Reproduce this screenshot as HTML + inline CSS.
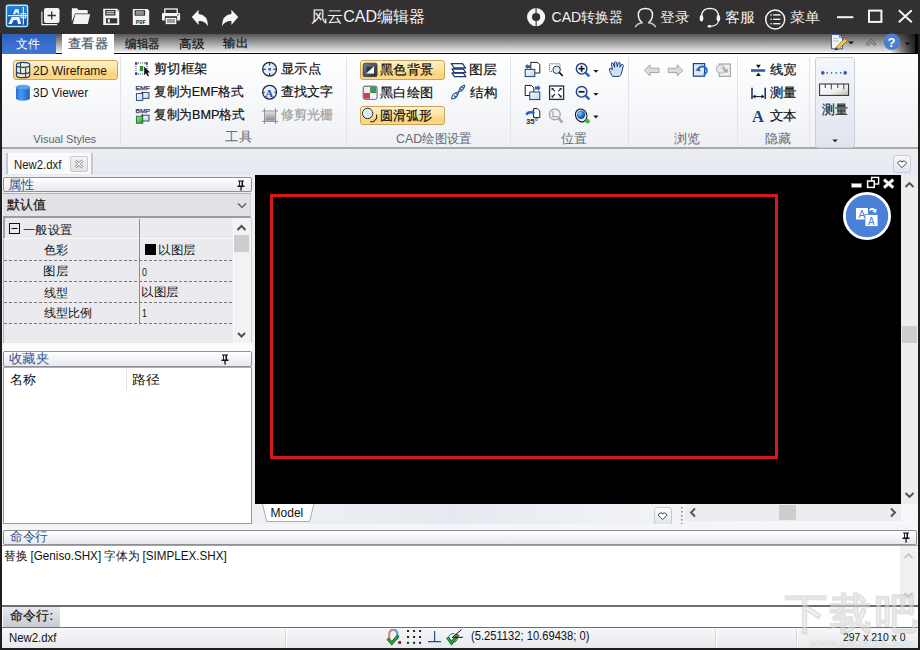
<!DOCTYPE html>
<html><head><meta charset="utf-8">
<style>
*{box-sizing:border-box;margin:0;padding:0}
html,body{width:920px;height:650px;overflow:hidden;background:#f0f0f0;font-family:"Liberation Sans",sans-serif;font-size:12px;color:#000}
.a{position:absolute;white-space:nowrap}
[id^=t_]{-webkit-text-stroke:0.2px currentColor}
#t_title,#t_conv,#t_login,#t_serv,#t_menu,#t_file,#t_fav,#t_prop,#t_cmdh,#t_name,#t_path,#t_2dw,#t_3dv,#t_vs,#t_tools,#t_cad,#t_pos,#t_brw,#t_hid,#t_tab,#t_model,#t_cmdl,#t_sfile,#t_coord,#t_size,#t_gen,#t_col,#t_glay,#t_ltype,#t_lscale,#t_v1,#t_v2,#t_v3,#t_v4{-webkit-text-stroke:0}
#title{left:0;top:0;width:920px;height:34px;background:#323031}
#menubar{left:0;top:34px;width:920px;height:19px;background:linear-gradient(#565656,#f2f2f2)}
#menuline{left:0;top:52px;width:920px;height:1px;background:#fff}
#menublack{left:0;top:53px;width:920px;height:1px;background:#000}
#ribbon{left:0;top:54px;width:920px;height:94px;background:linear-gradient(#ffffff 0%,#f7f8fa 50%,#eef0f4 100%)}
#ribbonline{left:0;top:147px;width:920px;height:2px;background:#a9a9a9}
#doctabs{left:0;top:149px;width:920px;height:26px;background:linear-gradient(#eceef4,#e6e9f1)}
.sep{position:absolute;top:57px;width:1px;height:89px;background:#e2e4e9}
.glabel{position:absolute;top:130px;color:#6d6d6d;font-size:13px}
.rt{position:absolute;font-size:13px;color:#1a1a1a}
.obtn{position:absolute;border:1px solid #c9a458;border-radius:3px;background:linear-gradient(#fdf1cc,#fde3a0 45%,#fbd277 75%,#fcd98a)}
</style></head><body>
<div class="a" id="title"></div>
<div class="a" id="menubar"></div>
<div class="a" id="menuline"></div>
<div class="a" id="menublack"></div>
<div class="a" style="left:890px;top:34px;width:28px;height:19px;background:linear-gradient(90deg,rgba(40,40,40,0),rgba(40,40,40,0.55) 45%,rgba(25,25,25,0.95) 88%,#000 92%)"></div>
<div class="a" id="ribbon"></div>
<div class="a" id="ribbonline"></div>
<div class="a" id="doctabs"></div>


<svg class="a" style="left:0;top:0" width="920" height="34" viewBox="0 0 920 34">
 <defs><linearGradient id="lg1" x1="0" y1="0" x2="0" y2="1"><stop offset="0" stop-color="#2484dc"/><stop offset="1" stop-color="#1a4aa8"/></linearGradient></defs>
 <!-- logo -->
 <rect x="6.4" y="5.2" width="21.2" height="21.2" rx="1.6" fill="url(#lg1)" stroke="#a8e8ff" stroke-width="1.5"/>
 <path d="M15 9.2 H18.6 L19.3 14.2 H12.8 Z" fill="#eef8ff"/>
 <path d="M15.6 12.6 H17.6 L17.9 14.2 H15.3 Z" fill="#2a70c8"/>
 <path d="M8.2 23.9 L11.8 16.9 H19.3 L21.2 23.9 H18.1 L17 19.9 H13.7 L11.6 23.9 Z" fill="#eef8ff"/>
 <rect x="7.8" y="15.1" width="19.4" height="1.1" fill="#eef8ff"/>
 <rect x="22.8" y="7" width="1.1" height="17.6" fill="#eef8ff"/>
 <rect x="21.1" y="13.6" width="4.6" height="4.2" fill="none" stroke="#eef8ff" stroke-width="0.9"/>
 <!-- new -->
 <path d="M41.9 11.4 V24.6 H57.2" fill="none" stroke="#f4f4f4" stroke-width="1.1"/>
 <rect x="44" y="8" width="15.5" height="15" rx="2" fill="#f4f4f4"/>
 <path d="M47.6 15.5 H55.8 M51.7 11.4 V19.6" stroke="#323031" stroke-width="1.3"/>
 <!-- open folder -->
 <path d="M71.8 22 V9.2 Q71.8 8.2 72.8 8.2 H77 L78.5 10 H86.5 Q87.8 10 87.8 11.2 V13.5 H75 L71.8 22 Z" fill="#f4f4f4"/>
 <path d="M72.8 24 L75.3 14.2 H90.2 L87.8 24 Z" fill="#f4f4f4"/>
 <!-- save -->
 <path d="M103.2 8.7 H117.5 L119.2 10.4 V25 H103.2 Z" fill="#f4f4f4"/>
 <rect x="105.2" y="10" width="10.3" height="5.5" fill="#323031"/>
 <rect x="106.3" y="11.3" width="8" height="1" fill="#f4f4f4"/><rect x="106.3" y="13.3" width="8" height="0.9" fill="#f4f4f4"/>
 <rect x="106" y="18.2" width="11.2" height="5.2" fill="#323031"/>
 <rect x="107.8" y="19.2" width="2" height="3.4" fill="#f4f4f4"/>
 <rect x="117.6" y="9.6" width="0.8" height="1.6" fill="#323031"/>
 <!-- save pdf -->
 <path d="M132.8 9 H147.5 L149.2 10.7 V25 H132.8 Z" fill="#f4f4f4"/>
 <rect x="134.6" y="10.2" width="10.5" height="5.5" fill="#323031"/>
 <rect x="135.8" y="11.5" width="8" height="1" fill="#f4f4f4"/><rect x="135.8" y="13.5" width="8" height="0.9" fill="#f4f4f4"/>
 <text x="135.8" y="24" font-family="Liberation Mono" font-size="5.6" font-weight="bold" fill="#323031">PDF</text>
 <!-- printer -->
 <rect x="164.8" y="9" width="12.4" height="5" fill="none" stroke="#f4f4f4" stroke-width="1.3"/>
 <rect x="162" y="13" width="18.1" height="7.6" rx="1" fill="#f4f4f4"/>
 <rect x="165" y="16.2" width="12" height="1.6" fill="#323031"/>
 <rect x="165.2" y="17.5" width="11.6" height="7.1" fill="#f4f4f4" stroke="#323031" stroke-width="0.8"/>
 <rect x="167" y="19.5" width="8" height="0.9" fill="#323031"/><rect x="167" y="21.5" width="8" height="0.9" fill="#323031"/>
 <rect x="177.3" y="14.3" width="1.4" height="1.2" fill="#323031"/>
 <!-- undo -->
 <path d="M191.8 16.9 L198.6 9.8 V13.9 Q207.8 14.6 208.2 26.5 Q205.2 20.6 198.6 21 V25.1 Z" fill="#f6f6f6"/>
 <!-- redo -->
 <path d="M238.2 16.9 L231.4 9.8 V13.9 Q222.2 14.6 221.8 26.5 Q224.8 20.6 231.4 21 V25.1 Z" fill="#f6f6f6"/>
 <!-- CAD converter ring -->
 <circle cx="536.1" cy="17.1" r="6.6" fill="none" stroke="#f4f4f4" stroke-width="5"/>
 <rect x="535.5" y="7" width="1.1" height="6" fill="#323031"/>
 <rect x="535.6" y="21.2" width="1.1" height="6" fill="#323031"/>
 <!-- user -->
 <path d="M642.5 22.8 Q638.3 20 638.3 14.5 Q638.5 8.4 645.4 8.4 Q652.3 8.4 652.5 14.5 Q652.5 20 648.3 22.8" fill="none" stroke="#f0f0f0" stroke-width="1.5"/>
 <path d="M635.3 27.3 Q637 23.3 642.5 22.8 M648.3 22.8 Q654 23.3 655.7 27.3" fill="none" stroke="#c8c8c8" stroke-width="1.5"/>
 <!-- headset -->
 <path d="M701.5 18 Q701 8.5 710 8.4 Q719 8.5 718.5 18" fill="none" stroke="#f4f4f4" stroke-width="1.4"/>
 <ellipse cx="701.5" cy="18.2" rx="1.8" ry="3.3" fill="#f4f4f4"/>
 <ellipse cx="718.4" cy="18.2" rx="1.8" ry="3.3" fill="#f4f4f4"/>
 <path d="M718.4 21 Q718 25.8 710.5 26.3" fill="none" stroke="#f4f4f4" stroke-width="1.2"/>
 <ellipse cx="709.5" cy="26.3" rx="1.9" ry="1.4" fill="#f4f4f4"/>
 <!-- menu circle -->
 <circle cx="775.2" cy="19.5" r="9.5" fill="none" stroke="#f4f4f4" stroke-width="1.5"/>
 <rect x="770.4" y="14.2" width="1.4" height="1.4" fill="#f4f4f4"/><rect x="773.2" y="14.2" width="7.2" height="1.4" fill="#f4f4f4"/>
 <rect x="770.4" y="18.6" width="1.4" height="1.4" fill="#f4f4f4"/><rect x="773.2" y="18.6" width="7.2" height="1.4" fill="#f4f4f4"/>
 <rect x="770.4" y="23" width="1.4" height="1.4" fill="#f4f4f4"/><rect x="773.2" y="23" width="7.2" height="1.4" fill="#f4f4f4"/>
 <!-- window controls -->
 <rect x="837" y="16.2" width="16.3" height="2" fill="#f4f4f4"/>
 <rect x="869" y="10.6" width="12.4" height="11.3" fill="none" stroke="#f4f4f4" stroke-width="2"/>
 <path d="M898.8 10.2 L911.8 22.2 M911.8 10.2 L898.8 22.2" stroke="#f4f4f4" stroke-width="1.9"/>
</svg>

<!-- title text -->

<!-- menu tabs -->
<div class="a" style="left:2px;top:34px;width:54px;height:20px;background:linear-gradient(#2d5fbd,#3a70cf 60%,#3c76d6)"></div>
<div class="a" style="left:62px;top:34px;width:52px;height:20px;background:#fff"></div>


<!-- doc tab -->
<div class="a" style="left:6px;top:153px;width:2px;height:21px;background:#c8c8cc"></div>
<div class="a" style="left:8px;top:153px;width:83px;height:21px;background:#fafafa"></div>
<div class="a" style="left:91px;top:153px;width:2px;height:21px;background:#c8c8cc"></div>
<div class="a" style="left:70px;top:156px;width:18px;height:16px;border:1px solid #c9c9cc;border-radius:2px;background:linear-gradient(#f4f4f4,#e2e2e4)"></div>
<svg class="a" style="left:70px;top:156px" width="18" height="16" viewBox="0 0 18 16"><path d="M5.5 4.5 L12.5 11.5 M12.5 4.5 L5.5 11.5" stroke="#777" stroke-width="2.6"/><path d="M5.5 4.5 L12.5 11.5 M12.5 4.5 L5.5 11.5" stroke="#fff" stroke-width="1.2"/></svg>
<div class="a" style="left:893px;top:155px;width:18px;height:18px;border:1px solid #c9cdd5;border-radius:3px;background:linear-gradient(#f6f7f9,#dfe4ec)"></div>
<svg class="a" style="left:893px;top:155px" width="18" height="18" viewBox="0 0 18 18"><path d="M4.4 8 L6.4 6 H8.2 L9 7.2 L9.8 6 H11.6 L13.6 8 L9 12.6 Z" fill="#fff" stroke="#333" stroke-width="0.9"/></svg>

<!-- left window border -->
<div class="a" style="left:0;top:34px;width:2px;height:616px;background:#1e1e1e"></div>
<div class="a" style="left:918px;top:34px;width:2px;height:616px;background:#1e1e1e"></div>
<div class="a" style="left:0;top:647px;width:920px;height:3px;background:#1e1e1e"></div>

<!-- properties panel -->
<div class="a" style="left:2px;top:175px;width:253px;height:355px;background:#f0f0f2"></div>
<div class="a" style="left:3px;top:177px;width:249px;height:15px;border:1px solid #8e9094;border-radius:2px;background:linear-gradient(#ffffff,#e6e8ee)"></div>
<svg class="a" style="left:236px;top:180px" width="10" height="11" viewBox="0 0 10 11"><path d="M2 0.5 H8 V1.5 H7 V5.5 H8.5 V7 H1.5 V5.5 H3 V1.5 H2 Z" fill="#111"/><rect x="3.9" y="1.6" width="1.6" height="3.9" fill="#f0f0f0"/><rect x="4.4" y="7" width="1.3" height="3.6" fill="#111"/></svg>
<div class="a" style="left:3px;top:193px;width:248px;height:25px;background:#e2e1e5;border-top:1px solid #b0b0b4;border-bottom:2px solid #9c9c9f;border-right:1px solid #d0d0d4"></div>
<svg class="a" style="left:237px;top:201px" width="10" height="9" viewBox="0 0 10 9"><path d="M1 2.5 L5 6.5 L9 2.5" fill="none" stroke="#555" stroke-width="1.2"/></svg>

<!-- grid -->
<div class="a" style="left:3px;top:218px;width:230px;height:125px;background:#ebebef;border-left:1px solid #b4b4b8"></div><div class="a" style="left:3px;top:218px;width:2px;height:20px;background:#a0a0a4"></div>
<div class="a" style="left:4px;top:238px;width:229px;height:1px;background:#fafafa"></div>
<div class="a" style="left:139px;top:219px;width:1px;height:104px;background:#8c8c8c"></div>
<svg class="a" style="left:4px;top:259px" width="229" height="66" viewBox="0 0 229 66"><path d="M0 1.5 H229 M0 22.5 H229 M0 43.5 H229 M0 64.5 H229" stroke="#7a7a7a" stroke-width="1" stroke-dasharray="3 2"/></svg>
<svg class="a" style="left:9px;top:223px" width="12" height="11" viewBox="0 0 12 11"><rect x="0.5" y="0.5" width="10" height="10" fill="none" stroke="#111"/><path d="M2.5 5.5 H8.5" stroke="#111"/></svg>
<div class="a" style="left:145px;top:244px;width:11px;height:11px;background:#000"></div>
<!-- grid scrollbar -->
<div class="a" style="left:233px;top:218px;width:18px;height:125px;background:#f2f2f4;border-left:1px solid #fafafa"></div>
<svg class="a" style="left:233px;top:219px" width="17" height="124" viewBox="0 0 17 124"><path d="M4.5 11 L8.5 7 L12.5 11" fill="none" stroke="#505050" stroke-width="2"/><rect x="1" y="16" width="15" height="17" fill="#cdcdcd"/><path d="M5 114 L8.5 117.5 L12 114" fill="none" stroke="#505050" stroke-width="2"/></svg>
<div class="a" style="left:251px;top:218px;width:1px;height:124px;background:#d0d0d4"></div>
<div class="a" style="left:3px;top:343px;width:249px;height:8px;background:#fbfbfc"></div>

<!-- favorites -->
<div class="a" style="left:3px;top:351px;width:249px;height:16px;border:1px solid #8e9094;border-radius:2px;background:linear-gradient(#ffffff,#e6e8ee)"></div>
<svg class="a" style="left:220px;top:354px" width="10" height="11" viewBox="0 0 10 11"><path d="M2 0.5 H8 V1.5 H7 V5.5 H8.5 V7 H1.5 V5.5 H3 V1.5 H2 Z" fill="#111"/><rect x="3.9" y="1.6" width="1.6" height="3.9" fill="#f0f0f0"/><rect x="4.4" y="7" width="1.3" height="3.6" fill="#111"/></svg>
<div class="a" style="left:3px;top:367px;width:249px;height:157px;background:#fff;border:1px solid #9a9a9a;border-top:1px solid #b0b0b0"></div>
<div class="a" style="left:126px;top:369px;width:1px;height:21px;background:#e2e2e2"></div>

<!-- viewport -->
<div class="a" style="left:255px;top:175px;width:646px;height:329px;background:#000"></div>
<div class="a" style="left:270px;top:194px;width:508px;height:265px;border:3px solid #d41a1a"></div>
<svg class="a" style="left:840px;top:174px" width="62" height="70" viewBox="840 174 62 70">
 <rect x="851.5" y="183.5" width="10" height="3.8" fill="#fff" stroke="#888" stroke-width="0.6"/>
 <rect x="871.6" y="177.4" width="7" height="6.6" fill="#000" stroke="#fff" stroke-width="1.4"/>
 <rect x="867.6" y="181" width="6.6" height="6.4" fill="#000" stroke="#fff" stroke-width="1.5"/>
 <path d="M884 179.6 L893.2 187.6 M893.2 179.6 L884 187.6" stroke="#999" stroke-width="3.4"/>
 <path d="M884 179.6 L893.2 187.6 M893.2 179.6 L884 187.6" stroke="#f4f8ff" stroke-width="2.2"/>
 <circle cx="867" cy="216" r="22.6" fill="#4a80d6" stroke="#fff" stroke-width="2.8"/>
 <rect x="856" y="208" width="12" height="11.5" fill="#fff"/>
 <text x="858.5" y="218" font-family="Liberation Sans" font-size="10" fill="#4a80d6">A</text>
 <rect x="865" y="214.5" width="13" height="12" fill="#fff" stroke="#4a80d6" stroke-width="0.8"/>
 <text x="868" y="224.5" font-family="Liberation Sans" font-size="10" fill="#4a80d6">A</text>
 <path d="M869 210 Q872 206 875 209.5 L876.6 208.4 L876 213 L872.2 211.6 L873.8 210.6 Q872 208.6 870.2 211 Z" fill="#fff"/>
</svg>
<!-- vscroll -->
<div class="a" style="left:901px;top:175px;width:17px;height:329px;background:#ededef"></div>
<svg class="a" style="left:901px;top:175px" width="17" height="329" viewBox="0 0 17 329"><path d="M4.5 12 L8.5 8 L12.5 12" fill="none" stroke="#505050" stroke-width="1.9"/><rect x="1" y="151" width="15" height="17" fill="#cdcdcd"/><path d="M4.5 318 L8.5 322 L12.5 318" fill="none" stroke="#505050" stroke-width="1.9"/></svg>
<!-- layout tabs strip -->
<div class="a" style="left:255px;top:504px;width:663px;height:20px;background:linear-gradient(90deg,#eef0f4,#e6eaf0 30%,#f4f5f8 70%,#f6f7f9)"></div>
<svg class="a" style="left:262px;top:503px" width="54" height="20" viewBox="0 0 54 20"><path d="M0.5 1 L4.8 18.5 H47.5 L52 1" fill="#fff" stroke="#a8acb4" stroke-width="1"/></svg>
<div class="a" style="left:654px;top:507px;width:18px;height:18px;border:1px solid #c5cad3;border-radius:3px;background:linear-gradient(#fbfbfc,#dfe5ee)"></div>
<svg class="a" style="left:648px;top:500px" width="42" height="28" viewBox="648 500 42 28"><path d="M658 515 L660 513 H661.8 L662.6 514.2 L663.4 513 H665.2 L667.2 515 L662.6 519.6 Z" fill="#fff" stroke="#333" stroke-width="0.9" stroke-linejoin="miter"/>
<path d="M681.8 507 V525" stroke="#777" stroke-width="1.4" stroke-dasharray="1.6 2.4"/></svg>
<div class="a" style="left:685px;top:504px;width:216px;height:17px;background:#ececee"></div>
<svg class="a" style="left:685px;top:504px" width="216" height="17" viewBox="0 0 216 17"><path d="M10 4.5 L6 8.5 L10 12.5" fill="none" stroke="#505050" stroke-width="1.9"/><rect x="94" y="1" width="17" height="15" fill="#cdcdcd"/><path d="M206 4.5 L210 8.5 L206 12.5" fill="none" stroke="#505050" stroke-width="1.9"/></svg>

<!-- command line panel -->
<div class="a" style="left:2px;top:524px;width:916px;height:6px;background:#f4f5f8"></div>
<div class="a" style="left:3px;top:530px;width:914px;height:15px;border:1px solid #8e9094;border-radius:2px;background:linear-gradient(#ffffff,#e6e8ee)"></div><div class="a" style="left:2px;top:545px;width:916px;height:1px;background:#a4a4a8"></div>
<svg class="a" style="left:901px;top:532px" width="10" height="11" viewBox="0 0 10 11"><path d="M2 0.5 H8 V1.5 H7 V5.5 H8.5 V7 H1.5 V5.5 H3 V1.5 H2 Z" fill="#111"/><rect x="3.9" y="1.6" width="1.6" height="3.9" fill="#f0f0f0"/><rect x="4.4" y="7" width="1.3" height="3.6" fill="#111"/></svg>
<div class="a" style="left:2px;top:546px;width:916px;height:59px;background:#fff"></div>
<div class="a" style="left:900px;top:546px;width:17px;height:59px;background:#f0f0f0"></div>
<svg class="a" style="left:900px;top:546px" width="17" height="59" viewBox="0 0 17 59"><path d="M4.5 12 L8.5 8 L12.5 12" fill="none" stroke="#bbb" stroke-width="1.5"/><path d="M4.5 47 L8.5 51 L12.5 47" fill="none" stroke="#bbb" stroke-width="1.5"/></svg>
<div class="a" style="left:2px;top:605px;width:916px;height:23px;border-top:2px solid #6e6e72;border-bottom:1px solid #6e6e72;background:#fff"></div>
<div class="a" style="left:3px;top:607px;width:57px;height:20px;background:linear-gradient(#e8e9ee,#c8cad2)"></div>
<!-- status bar -->
<div class="a" style="left:2px;top:628px;width:916px;height:20px;background:linear-gradient(#f6f7f9,#e7e9ee)"></div>
<svg class="a" style="left:380px;top:628px" width="90" height="20" viewBox="380 628 90 20">
 <path d="M389.2 639.5 V634.5 Q389.2 629.8 393.3 629.8" fill="none" stroke="#d08a88" stroke-width="2.2"/>
 <path d="M393.3 629.8 Q397.4 629.8 397.4 634.5 V639.5" fill="none" stroke="#6a9ad8" stroke-width="2.2"/>
 <path d="M387.6 638.6 L391.8 643.2 L398.4 635.6" fill="none" stroke="#1a4a1a" stroke-width="3"/>
 <path d="M387.6 638.6 L391.8 643.2 L398.4 635.6" fill="none" stroke="#2fb02f" stroke-width="1.6"/>
 <rect x="398.3" y="641.1" width="2.8" height="2.8" fill="#a01010"/>
 <g fill="#222"><rect x="407" y="630" width="2" height="2"/><rect x="413.1" y="630" width="2" height="2"/><rect x="419.1" y="630" width="2" height="2"/><rect x="407" y="636" width="2" height="2"/><rect x="413.1" y="636" width="2" height="2"/><rect x="419.1" y="636" width="2" height="2"/><rect x="407" y="641.8" width="2" height="2"/><rect x="413.1" y="641.8" width="2" height="2"/><rect x="419.1" y="641.8" width="2" height="2"/></g>
 <path d="M434.6 630.9 V641.6 M428 641.6 H441" stroke="#2a4a8a" stroke-width="1.2"/>
 <circle cx="453" cy="638" r="4.4" fill="none" stroke="#4a6aa0" stroke-width="1"/>
 <path d="M447.4 637.4 L451.6 643 L458.2 634.6" fill="none" stroke="#1a4a1a" stroke-width="3"/>
 <path d="M447.4 637.4 L451.6 643 L458.2 634.6" fill="none" stroke="#2fb02f" stroke-width="1.6"/>
 <path d="M452.6 637.2 L461.5 629.6 M452 637.3 H462.9" stroke="#111" stroke-width="1"/>
</svg>


<!-- status separators -->
<div class="a" style="left:285px;top:629px;width:1px;height:18px;background:#d4d6dc;box-shadow:1px 0 0 #fff"></div>
<div class="a" style="left:715px;top:629px;width:1px;height:18px;background:#d4d6dc;box-shadow:1px 0 0 #fff"></div>
<div class="a" style="left:796px;top:629px;width:1px;height:18px;background:#d4d6dc;box-shadow:1px 0 0 #fff"></div>
<!-- ribbon groups -->
<div class="sep" style="left:120px"></div>
<div class="sep" style="left:346px"></div>
<div class="sep" style="left:510px"></div>
<div class="sep" style="left:628px"></div>
<div class="sep" style="left:737px"></div>
<div class="sep" style="left:809px"></div>


<div class="obtn" style="left:13px;top:60px;width:105px;height:20px"></div>


<div class="obtn" style="left:360px;top:60px;width:85px;height:20px"></div>
<div class="obtn" style="left:360px;top:106px;width:85px;height:19px"></div>


<div class="a" style="left:815px;top:57px;width:40px;height:91px;border:1px solid #c9d0dc;border-radius:3px;background:linear-gradient(#f4f6fa,#dfe5ef)"></div>


<svg class="a" style="left:0;top:0" width="920" height="160" viewBox="0 0 920 160">
 <defs>
  <linearGradient id="cyl" x1="0" y1="0" x2="1" y2="0"><stop offset="0" stop-color="#2a6fd6"/><stop offset="0.35" stop-color="#4a9af0"/><stop offset="1" stop-color="#1f5cc4"/></linearGradient>
  <linearGradient id="lb" x1="0" y1="0" x2="1" y2="1"><stop offset="0" stop-color="#ffffff"/><stop offset="1" stop-color="#b9d3ef"/></linearGradient>
  <linearGradient id="grn" x1="0" y1="0" x2="1" y2="1"><stop offset="0" stop-color="#9be39a"/><stop offset="1" stop-color="#2f9a34"/></linearGradient>
  <linearGradient id="dk" x1="0" y1="0" x2="1" y2="1"><stop offset="0" stop-color="#7a7f88"/><stop offset="1" stop-color="#23272e"/></linearGradient>
  <linearGradient id="gry" x1="0" y1="0" x2="0" y2="1"><stop offset="0" stop-color="#d8d8d8"/><stop offset="1" stop-color="#6f6f6f"/></linearGradient>
  <linearGradient id="rul" x1="0" y1="0" x2="1" y2="1"><stop offset="0" stop-color="#ffffff"/><stop offset="0.6" stop-color="#eeeeee"/><stop offset="1" stop-color="#b4b4b4"/></linearGradient>
  <radialGradient id="ball" cx="0.35" cy="0.35" r="0.7"><stop offset="0" stop-color="#9fd0ff"/><stop offset="0.5" stop-color="#2f7ce0"/><stop offset="1" stop-color="#0b3c90"/></radialGradient>
 </defs>
 <!-- 2D wireframe cylinder -->
 <path d="M16.5 64.6 Q16.5 62.3 23.1 62.3 Q29.7 62.3 29.7 64.6 V75.4 Q29.7 77.7 23.1 77.7 Q16.5 77.7 16.5 75.4 Z" fill="rgba(225,240,255,0.55)" stroke="#25406a" stroke-width="1.2"/>
 <path d="M16.5 66.4 Q23.1 68.4 29.7 66.4 M16.5 72.6 Q23.1 74.6 29.7 72.6 M20.5 62.6 V72.8 M25.6 67.6 V77.6" fill="none" stroke="#25406a" stroke-width="1.1"/>
 <!-- 3D cylinder -->
 <path d="M16 87.5 V98.3 A6.9 2.4 0 0 0 29.8 98.3 V87.5 Z" fill="url(#cyl)"/>
 <ellipse cx="22.9" cy="87.5" rx="6.9" ry="2.3" fill="#5aa3f2" stroke="#3b7ad6" stroke-width="0.6"/>
 <!-- crop frame icon -->
 <rect x="136" y="63" width="11" height="11" fill="none" stroke="#334" stroke-width="0.9" stroke-dasharray="1 1"/>
 <rect x="135" y="62.2" width="2.4" height="2.4" fill="#1f4f9a"/><rect x="145.4" y="62.2" width="2.4" height="2.4" fill="#1f4f9a"/>
 <rect x="135" y="72.6" width="2.4" height="2.4" fill="#1f4f9a"/>
 <rect x="139.8" y="66" width="3.4" height="5.2" fill="#2a8f2e"/>
 <path d="M144.2 66.6 L144.2 75 L146.2 73.2 L147.8 76.4 L149 75.8 L147.5 72.6 L150 72.4 Z" fill="#111"/>
 <!-- EMF -->
 <text x="135.4" y="90.4" font-family="Liberation Sans" font-size="6.2" fill="#1a3a70" stroke="#1a3a70" stroke-width="0.25" textLength="14.6" lengthAdjust="spacingAndGlyphs">EMF</text>
 <rect x="142.4" y="92.6" width="6.6" height="5.8" fill="url(#lb)" stroke="#223b66" stroke-width="0.9"/>
 <rect x="136.4" y="93.6" width="6.4" height="6.8" fill="url(#lb)" stroke="#223b66" stroke-width="0.9"/><rect x="141.6" y="91.8" width="1.2" height="1.4" fill="#111"/>
 <!-- BMP -->
 <text x="135.4" y="113.4" font-family="Liberation Sans" font-size="6.2" fill="#1a3a70" stroke="#1a3a70" stroke-width="0.25" textLength="14.6" lengthAdjust="spacingAndGlyphs">BMP</text>
 <rect x="142.4" y="115.2" width="6.6" height="5.8" fill="url(#lb)" stroke="#223b66" stroke-width="0.9"/>
 <rect x="136.4" y="116.2" width="6.4" height="7" fill="url(#grn)" stroke="#1f6a25" stroke-width="0.9"/><rect x="141.6" y="114.4" width="1.2" height="1.4" fill="#111"/>
 <!-- show point -->
 <circle cx="269.6" cy="69.2" r="6.9" fill="#e4eefa" stroke="#1d2b44" stroke-width="1.3"/>
 <path d="M269.6 62.5 V65.5 M269.6 73 V76 M262.9 69.2 H265.8 M273.4 69.2 H276.3" stroke="#1d2b44" stroke-width="1.1"/>
 <rect x="268.4" y="68" width="2.5" height="2.5" fill="#2f5fa8"/>
 <!-- find text -->
 <circle cx="269.6" cy="92.2" r="6.9" fill="#e4eefa" stroke="#1d2b44" stroke-width="1.3"/>
 <path d="M262.9 92.2 H264.8 M274.4 92.2 H276.3" stroke="#1d2b44" stroke-width="1.1"/>
 <text x="265.2" y="96.6" font-family="Liberation Serif" font-weight="bold" font-size="11" fill="#1f4fa0">A</text>
 <!-- trim raster (gray) -->
 <path d="M262.2 111 H278 M262.2 121.4 H278 M264.6 108.3 V124 M275.6 108.3 V124" stroke="#8a8a8a" stroke-width="1"/>
 <rect x="265.4" y="111.8" width="9.4" height="8.8" fill="url(#gry)" opacity="0.8"/>
 <!-- black background icon -->
 <rect x="363.2" y="63.2" width="13.8" height="13.4" rx="1.5" fill="url(#dk)" stroke="#2e3540" stroke-width="0.8"/>
 <rect x="366.2" y="66.2" width="7.8" height="7.4" fill="#f4f6fa"/>
 <path d="M366.2 66.2 H374 L366.2 73.6 Z" fill="#2e3440"/>
 <!-- bw drawing icon -->
 <rect x="363.2" y="86.2" width="13.8" height="13" rx="1.5" fill="#fff" stroke="#283a66" stroke-width="0.9"/>
 <rect x="364" y="87" width="6" height="6" fill="#f7e8ea"/>
 <rect x="370.1" y="87" width="6.1" height="6" fill="#3c9a46"/>
 <rect x="364" y="93" width="6" height="5.6" fill="#c9414a"/>
 <rect x="370.1" y="93" width="6.1" height="5.6" fill="#f4f6fb"/>
 <!-- smooth arc -->
 <circle cx="367.6" cy="113.4" r="5.2" fill="#e2ecf8" stroke="#1e2a40" stroke-width="1"/>
 <path d="M370 121.8 H373.2 L376.6 118.4 V114.6" fill="none" stroke="#1e2a40" stroke-width="1.1"/>
 <!-- layers -->
 <g fill="#fff" stroke="#1f3a6e" stroke-width="1.3" stroke-linejoin="round">
  <path d="M452 73 H463.3 L465.8 76.6 H454.5 Z"/>
  <path d="M452 69 H463.3 L465.8 72.6 H454.5 Z"/>
  <path d="M451.2 63.6 H462.5 L465.6 68 H454.3 Z"/>
 </g>
 <!-- structure DNA -->
 <g fill="none" stroke="#23508f" stroke-width="1.2">
  <path d="M451.5 99 Q452 93 458 92 Q464 91 464.8 85"/>
  <path d="M451.5 99 Q457.5 98.6 458.5 92.5 Q459.5 86 464.8 85"/>
  <path d="M454 95.5 L456 97.3 M455.6 93.3 L457.6 95 M460.2 88.8 L462.2 90.6 M461.6 86.6 L463.2 88"/>
 </g>
 <!-- pos row1 col1 -->
 <path d="M530.8 62.4 H537.6 L539.8 64.6 V73 H530.8 Z" fill="#fff" stroke="#1c1c1c" stroke-width="1"/>
 <rect x="525.2" y="69.4" width="9.6" height="7.2" fill="url(#lb)" stroke="#1f3f73" stroke-width="1"/>
 <path d="M525 66.6 L527.6 63.8 V65.3 H530 V68 H527.6 V69.4 Z" fill="#2a62b8"/>
 <!-- pos row1 col2 zoom window -->
 <rect x="549.6" y="63.8" width="10.4" height="7.6" fill="none" stroke="#333" stroke-width="0.9" stroke-dasharray="1 1"/>
 <circle cx="556.6" cy="69.8" r="3.7" fill="#dfeaf7" stroke="#2b3850" stroke-width="1"/>
 <path d="M559.2 72.4 L562.8 76" stroke="#111" stroke-width="1.7"/>
 <!-- zoom in -->
 <circle cx="581.6" cy="68.8" r="5.3" fill="#eef4fb" stroke="#1f3f80" stroke-width="1.4"/>
 <path d="M578.6 68.8 H584.6 M581.6 65.8 V71.8" stroke="#111" stroke-width="1.6"/>
 <path d="M585.4 72.6 L589.4 76.4" stroke="#2a62c0" stroke-width="2.6"/>
 <path d="M593.3 70 H598.5 L595.9 72.8 Z" fill="#1a1a1a"/>
 <!-- hand -->
 <path d="M612.6 76.4 Q609.6 72.4 609.3 69.2 Q609.5 67.6 611.2 68.6 L612.4 70 L611.4 63.6 Q611.6 62.2 613 63 L614.6 67.4 L614.6 62.2 Q615.6 61.2 616.6 62.2 L617.2 66.6 L618.4 62.6 Q619.6 61.8 620.2 63 L619.8 67.2 L621.6 64.4 Q623.2 64.2 623.4 65.4 L621.8 72 Q621.4 74.6 619.4 76.4 Z" fill="#cfe0f6" stroke="#223d7a" stroke-width="1"/>
 <!-- pos row2 col1 -->
 <path d="M525.2 85.4 H531.4 L533.8 87.8 V95.5 H525.2 Z" fill="#fff" stroke="#1c1c1c" stroke-width="1"/>
 <rect x="529.8" y="92" width="10" height="7.6" fill="url(#lb)" stroke="#1f3f73" stroke-width="1"/>
 <path d="M535 86.6 H538 L538 85 L540.5 88 L538 91 V89.4 H535 Z" fill="#2a62b8"/>
 <!-- zoom extents -->
 <rect x="549.6" y="86" width="14" height="13.4" fill="#fff" stroke="#1d2d4a" stroke-width="1.3"/>
 <path d="M552 88.4 L555 91.4 M561.2 88.4 L558.2 91.4 M552 97 L555 94 M561.2 97 L558.2 94" stroke="#1d2d4a" stroke-width="1.1"/>
 <path d="M551.6 88 H554 L551.6 90.4 Z M561.6 88 H559.2 L561.6 90.4 Z M551.6 97.4 H554 L551.6 95 Z M561.6 97.4 H559.2 L561.6 95 Z" fill="#1d2d4a"/>
 <!-- zoom out -->
 <circle cx="581.6" cy="91.8" r="5.3" fill="#eef4fb" stroke="#1f3f80" stroke-width="1.4"/>
 <path d="M578.6 91.8 H584.6" stroke="#111" stroke-width="1.7"/>
 <path d="M585.4 95.6 L589.4 99.4" stroke="#2a62c0" stroke-width="2.6"/>
 <path d="M593.3 93 H598.5 L595.9 95.8 Z" fill="#1a1a1a"/>
 <!-- pos row3 col1 rotate 35 -->
 <path d="M533.6 108.6 H537.4 L539.8 111 V117.6 H533.6 Z" fill="#fff" stroke="#1c1c1c" stroke-width="1"/>
 <path d="M525.2 114 Q527.4 110 532.4 111.2 L532.4 109.8 L535 112.6 L532.4 115 V113.6 Q528.8 113 527.2 115.6 Z" fill="#2a62b8"/>
 <text x="526" y="123.6" font-family="Liberation Sans" font-weight="bold" font-size="7.8" fill="#14305e">35°</text>
 <!-- gray zoom prev -->
 <circle cx="554.8" cy="114.4" r="5.4" fill="#f2f2f2" stroke="#a8a8a8" stroke-width="1.4"/>
 <path d="M553 111.2 V116.6 H558" fill="none" stroke="#a8a8a8" stroke-width="1.3"/>
 <path d="M558.8 118.4 L562.4 122.6" stroke="#a8a8a8" stroke-width="2.4"/>
 <!-- ball -->
 <ellipse cx="581.2" cy="115.4" rx="5.6" ry="6.6" fill="#e9eef5" stroke="#111" stroke-width="1.1" transform="rotate(-25 581.2 115.4)"/>
 <circle cx="581" cy="114.8" r="4.2" fill="url(#ball)"/>
 <circle cx="587.6" cy="121.3" r="2.2" fill="#3cbf3c"/>
 <path d="M593.3 115.6 H598.5 L595.9 118.4 Z" fill="#1a1a1a"/>
 <!-- back / forward gray arrows -->
 <path d="M644.4 70.4 L650 64.8 V68.2 H659 V72.6 H650 V76 Z" fill="#dcdcdc" stroke="#a5a5a5" stroke-width="1"/>
 <path d="M682.8 70.4 L677.2 64.8 V68.2 H668.2 V72.6 H677.2 V76 Z" fill="#dcdcdc" stroke="#a5a5a5" stroke-width="1"/>
 <!-- blue doc return -->
 <rect x="693.4" y="63.6" width="11.2" height="12.6" fill="#dfe9f6" stroke="#1f3f80" stroke-width="1.2"/>
 <path d="M697.4 70.6 Q699 66 703.6 66.6 Q707.6 67.6 706.6 72 Q705.8 74.2 703.6 74.8" fill="none" stroke="#1f6fd0" stroke-width="2"/>
 <path d="M695.4 70.6 L699.2 67 L700.6 71.6 Z" fill="#1f6fd0"/>
 <!-- gray doc -->
 <rect x="719.2" y="64" width="11.2" height="12.4" fill="#f0f0f0" stroke="#a9a9a9" stroke-width="1.2"/>
 <circle cx="720.6" cy="69" r="4.2" fill="#e6e6e6" stroke="#b0b0b0" stroke-width="1.1"/>
 <path d="M722.4 67.4 L727 72 M727 68.8 V72 H723.8" fill="none" stroke="#9a9a9a" stroke-width="1.2"/>
 <!-- line width icon -->
 <rect x="751" y="69.2" width="14.2" height="2.6" fill="#2f5cad"/>
 <path d="M756 64.8 H760.8 L758.4 68.2 Z M756 76 H760.8 L758.4 72.6 Z" fill="#111"/>
 <!-- measure icon -->
 <path d="M752 87.8 V99 M765.2 87.8 V99" stroke="#1f3a70" stroke-width="1.6"/>
 <path d="M753 96.6 H764" stroke="#111" stroke-width="1"/>
 <path d="M752.6 96.6 L755.4 94.6 V98.6 Z M764.4 96.6 L761.6 94.6 V98.6 Z" fill="#111"/>
 <!-- A icon -->
 <text x="752" y="122" font-family="Liberation Serif" font-weight="bold" font-size="16.5" fill="#1e3f8a">A</text>
 <!-- big measure button icons -->
 <circle cx="822.8" cy="72.9" r="1.8" fill="#2a5aa8"/><circle cx="845.2" cy="72.9" r="1.8" fill="#2a5aa8"/>
 <circle cx="827.2" cy="72.9" r="0.8" fill="#2a5aa8"/><circle cx="831.6" cy="72.9" r="0.8" fill="#2a5aa8"/><circle cx="836.2" cy="72.9" r="0.8" fill="#2a5aa8"/><circle cx="840.6" cy="72.9" r="0.8" fill="#2a5aa8"/>
 <rect x="819.6" y="84" width="29" height="11.4" fill="url(#rul)" stroke="#2a2a2a" stroke-width="1"/>
 <path d="M825.3 84 V88 M831.3 84 V89.4 M837.8 84 V88 M843.8 84 V89.4" stroke="#2a2a2a" stroke-width="0.9"/>
 <path d="M832.4 139.4 H837.8 L835.1 142.2 Z" fill="#222"/>
 <!-- top-right small icons -->
 <path d="M831.4 34.6 H839.6 L842.6 37.6 V48.8 H831.4 Z" fill="#f2f6fc" stroke="#3556a0" stroke-width="1"/>
 <path d="M839.6 34.6 V37.6 H842.6" fill="none" stroke="#3556a0" stroke-width="0.8"/>
 <path d="M833 38.5 H838 M833 41 H839" stroke="#9ab" stroke-width="0.7"/>
 <path d="M836 47.2 L844.8 38.4 L847.2 40.8 L838.4 49.6 Z" fill="#f2c640" stroke="#6a5a20" stroke-width="0.6"/>
 <path d="M836 47.2 L838.4 49.6 L834.4 50.6 Z" fill="#2a3a6a"/>
 <path d="M848 41.6 H854 L851 44.2 Z" fill="#111"/>
 <path d="M866.6 44.2 L871.3 38.8 L876 44.2 L874.2 45.4 L871.3 42.2 L868.4 45.4 Z" fill="none" stroke="#585858" stroke-width="0.9" stroke-linejoin="round"/>
 <circle cx="891.9" cy="41.8" r="8.3" fill="#4b80d0"/>
 <text x="887.6" y="46.6" font-family="Liberation Sans" font-weight="bold" font-size="13" fill="#fff">?</text>
 <path d="M904.5 42.6 H910.5 L907.5 45.2 Z" fill="#111"/>
</svg>

<div class="a" id="t_title" style="left:311.3px;top:7.1px;font-size:16px;color:#f2f2f2;">风云CAD编辑器</div>
<div class="a" id="t_conv" style="left:551.6px;top:8.5px;font-size:14px;color:#f2f2f2;">CAD转换器</div>
<div class="a" id="t_login" style="left:660.0px;top:8.6px;font-size:14px;color:#f2f2f2;transform:scaleX(1.050);transform-origin:0 0;">登录</div>
<div class="a" id="t_serv" style="left:724.9px;top:9.1px;font-size:14px;color:#f2f2f2;transform:scaleX(1.077);transform-origin:0 0;">客服</div>
<div class="a" id="t_menu" style="left:789.9px;top:9.0px;font-size:14px;color:#f2f2f2;transform:scaleX(1.073);transform-origin:0 0;">菜单</div>
<div class="a" id="t_file" style="left:16.0px;top:35.5px;font-size:12px;color:#ffffff;">文件</div>
<div class="a" id="t_view" style="left:68.0px;top:35.1px;font-size:13px;color:#4d5868;transform:scaleX(1.026);transform-origin:0 0;">查看器</div>
<div class="a" id="t_edit" style="left:124.5px;top:35.9px;font-size:12px;color:#151515;transform:scaleX(0.977);transform-origin:0 0;">编辑器</div>
<div class="a" id="t_adv" style="left:179.0px;top:35.9px;font-size:12px;color:#151515;transform:scaleX(1.045);transform-origin:0 0;">高级</div>
<div class="a" id="t_out" style="left:223.0px;top:35.4px;font-size:12px;color:#151515;transform:scaleX(1.045);transform-origin:0 0;">输出</div>
<div class="a" id="t_2dw" style="left:33.0px;top:63.6px;font-size:12px;color:#1a1a1a;">2D Wireframe</div>
<div class="a" id="t_3dv" style="left:33.0px;top:86.4px;font-size:12px;color:#1a1a1a;">3D Viewer</div>
<div class="a" id="t_vs" style="left:33.3px;top:132.8px;font-size:11px;color:#5f636b;">Visual Styles</div>
<div class="a" id="t_crop" style="left:153.5px;top:60.2px;font-size:13px;color:#111;transform:scaleX(1.030);transform-origin:0 0;">剪切框架</div>
<div class="a" id="t_emf" style="left:153.5px;top:83.0px;font-size:13px;color:#111;transform:scaleX(0.967);transform-origin:0 0;">复制为EMF格式</div>
<div class="a" id="t_bmp" style="left:153.5px;top:106.0px;font-size:13px;color:#111;transform:scaleX(0.973);transform-origin:0 0;">复制为BMP格式</div>
<div class="a" id="t_pt" style="left:281.0px;top:60.2px;font-size:13px;color:#111;transform:scaleX(1.026);transform-origin:0 0;">显示点</div>
<div class="a" id="t_find" style="left:281.0px;top:83.2px;font-size:13px;color:#111;">查找文字</div>
<div class="a" id="t_trim" style="left:281.0px;top:106.2px;font-size:13px;color:#a0a0a0;">修剪光栅</div>
<div class="a" id="t_tools" style="left:225.0px;top:128.2px;font-size:13px;color:#666a72;transform:scaleX(1.040);transform-origin:0 0;">工具</div>
<div class="a" id="t_blk" style="left:380.0px;top:60.8px;font-size:13px;color:#111;transform:scaleX(1.020);transform-origin:0 0;">黑色背景</div>
<div class="a" id="t_bw" style="left:380.0px;top:83.8px;font-size:13px;color:#111;transform:scaleX(1.020);transform-origin:0 0;">黑白绘图</div>
<div class="a" id="t_arc" style="left:380.0px;top:106.8px;font-size:13px;color:#111;">圆滑弧形</div>
<div class="a" id="t_lay" style="left:468.9px;top:60.8px;font-size:13px;color:#111;transform:scaleX(1.067);transform-origin:0 0;">图层</div>
<div class="a" id="t_str" style="left:470.0px;top:83.8px;font-size:13px;color:#111;transform:scaleX(1.040);transform-origin:0 0;">结构</div>
<div class="a" id="t_cad" style="left:395.7px;top:129.5px;font-size:13px;color:#666a72;transform:scaleX(0.952);transform-origin:0 0;">CAD绘图设置</div>
<div class="a" id="t_pos" style="left:561.3px;top:129.5px;font-size:13px;color:#666a72;">位置</div>
<div class="a" id="t_brw" style="left:674.0px;top:129.5px;font-size:13px;color:#666a72;">浏览</div>
<div class="a" id="t_hid" style="left:764.7px;top:129.5px;font-size:13px;color:#666a72;">隐藏</div>
<div class="a" id="t_lw" style="left:770.0px;top:60.8px;font-size:13px;color:#111;transform:scaleX(1.032);transform-origin:0 0;">线宽</div>
<div class="a" id="t_meas" style="left:770.0px;top:83.5px;font-size:13px;color:#111;transform:scaleX(1.032);transform-origin:0 0;">测量</div>
<div class="a" id="t_txt" style="left:770.0px;top:107.0px;font-size:13px;color:#111;transform:scaleX(1.032);transform-origin:0 0;">文本</div>
<div class="a" id="t_bmeas" style="left:821.6px;top:101.1px;font-size:13px;color:#222;">测量</div>
<div class="a" id="t_tab" style="left:13.6px;top:158.2px;font-size:12px;color:#1a1a1a;transform:scaleX(0.949);transform-origin:0 0;">New2.dxf</div>
<div class="a" id="t_prop" style="left:8.0px;top:175.5px;font-size:13px;color:#34548f;transform:scaleX(1.024);transform-origin:0 0;">属性</div>
<div class="a" id="t_def" style="left:7.0px;top:196.2px;font-size:13px;color:#111;">默认值</div>
<div class="a" id="t_gen" style="left:23.0px;top:222.0px;font-size:12px;color:#111;transform:scaleX(1.022);transform-origin:0 0;">一般设置</div>
<div class="a" id="t_col" style="left:44.0px;top:242.0px;font-size:12px;color:#111;">色彩</div>
<div class="a" id="t_glay" style="left:43.0px;top:263.0px;font-size:12px;color:#111;transform:scaleX(1.045);transform-origin:0 0;">图层</div>
<div class="a" id="t_ltype" style="left:44.0px;top:284.5px;font-size:12px;color:#111;">线型</div>
<div class="a" id="t_lscale" style="left:44.0px;top:305.0px;font-size:12px;color:#111;">线型比例</div>
<div class="a" id="t_v1" style="left:158.0px;top:242.0px;font-size:12px;color:#111;transform:scaleX(1.047);transform-origin:0 0;">以图层</div>
<div class="a" id="t_v2" style="left:142.0px;top:265.5px;font-size:11px;color:#111;transform:scaleX(0.800);transform-origin:0 0;">0</div>
<div class="a" id="t_v3" style="left:141.0px;top:284.0px;font-size:12px;color:#111;transform:scaleX(1.047);transform-origin:0 0;">以图层</div>
<div class="a" id="t_v4" style="left:141.7px;top:307.1px;font-size:11px;color:#111;transform:scaleX(0.800);transform-origin:0 0;">1</div>
<div class="a" id="t_fav" style="left:8.6px;top:349.8px;font-size:13px;color:#34548f;transform:scaleX(1.038);transform-origin:0 0;">收藏夹</div>
<div class="a" id="t_name" style="left:10.0px;top:371.2px;font-size:13px;color:#111;">名称</div>
<div class="a" id="t_path" style="left:132.2px;top:371.0px;font-size:13px;color:#111;transform:scaleX(1.071);transform-origin:0 0;">路径</div>
<div class="a" id="t_model" style="left:270.6px;top:505.6px;font-size:12px;color:#111;">Model</div>
<div class="a" id="t_cmdh" style="left:9.5px;top:527.8px;font-size:13px;color:#34548f;transform:scaleX(0.979);transform-origin:0 0;">命令行</div>
<div class="a" id="t_cmdl" style="left:4.2px;top:548.2px;font-size:12px;color:#111;transform:scaleX(0.971);transform-origin:0 0;">替换 [Geniso.SHX] 字体为 [SIMPLEX.SHX]</div>
<div class="a" id="t_cmdp" style="left:10.4px;top:606.7px;font-size:13px;color:#111;">命令行:</div>
<div class="a" id="t_sfile" style="left:8.6px;top:630.5px;font-size:12px;color:#111;transform:scaleX(0.949);transform-origin:0 0;">New2.dxf</div>
<div class="a" id="t_coord" style="left:471.1px;top:629.0px;font-size:12px;color:#111;transform:scaleX(0.931);transform-origin:0 0;">(5.251132; 10.69438; 0)</div>
<div class="a" id="t_size" style="left:842.6px;top:631.0px;font-size:11px;color:#111;transform:scaleX(0.945);transform-origin:0 0;">297 x 210 x 0</div>
<div class="a" style="left:785px;top:586px;font-size:42px;font-weight:bold;letter-spacing:3px;color:rgba(255,255,255,0.5);-webkit-text-stroke:1px rgba(140,140,140,0.25);line-height:normal">下载吧</div>
<div class="a" style="left:809px;top:637px;font-size:11.5px;font-weight:bold;letter-spacing:0.3px;color:rgba(255,255,255,0.4);-webkit-text-stroke:0.7px rgba(140,140,140,0.22);line-height:normal">www.xiazaiba.com</div>

</body></html>
